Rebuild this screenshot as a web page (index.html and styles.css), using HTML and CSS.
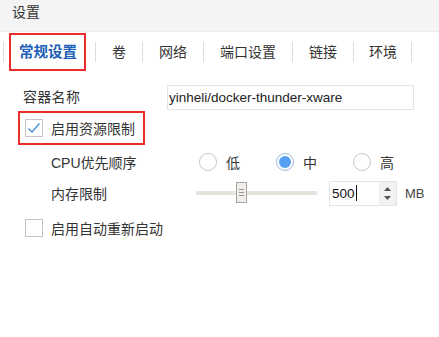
FILE: index.html
```html
<!DOCTYPE html>
<html lang="zh">
<head>
<meta charset="utf-8">
<title>设置</title>
<link rel="stylesheet" href="styles.css">
</head>
<body>
<div class="window">
  <div class="titlebar">设置</div>
  <div class="tabs">
    <div class="tab tab-active"><span class="mark">常规设置</span></div>
    <div class="tab">卷</div>
    <div class="tab">网络</div>
    <div class="tab">端口设置</div>
    <div class="tab">链接</div>
    <div class="tab tab-last">环境</div>
  </div>
  <div class="form">
    <div class="row row-name">
      <div class="label label-name">容器名称</div>
      <div class="text-input">yinheli/docker-thunder-xware</div>
    </div>
    <div class="limit-box">
      <span class="checkbox checked">
        <svg width="14" height="12" viewBox="0 0 14 12"><path d="M1.5 6.5 L5 10 L12.5 1.5" fill="none" stroke="#4a8fd8" stroke-width="1.4"/></svg>
      </span>
      <span class="check-label">启用资源限制</span>
    </div>
    <div class="row row-cpu">
      <div class="label label-sub">CPU优先顺序</div>
      <div class="radios">
        <div class="radio-opt"><span class="radio"></span><span class="radio-text">低</span></div>
        <div class="radio-opt"><span class="radio selected"><span class="dot"></span></span><span class="radio-text">中</span></div>
        <div class="radio-opt"><span class="radio"></span><span class="radio-text">高</span></div>
      </div>
    </div>
    <div class="row row-mem">
      <div class="label label-mem">内存限制</div>
      <div class="slider">
        <div class="track"></div>
        <div class="thumb"><i></i><i></i><i></i></div>
      </div>
      <div class="spin">
        <div class="spin-value">500<span class="caret"></span></div>
        <div class="spin-btns">
          <svg width="7" height="4" viewBox="0 0 7 4"><path d="M0 4 L3.5 0 L7 4 Z" fill="#555"/></svg>
          <svg width="7" height="4" viewBox="0 0 7 4"><path d="M0 0 L3.5 4 L7 0 Z" fill="#555"/></svg>
        </div>
      </div>
      <div class="unit">MB</div>
    </div>
    <div class="row row-restart">
      <span class="checkbox"></span>
      <span class="check-label">启用自动重新启动</span>
    </div>
  </div>
</div>
</body>
</html>
```
FILE: styles.css
```css
* { box-sizing: border-box; }
html, body {
  margin: 0;
  padding: 0;
  background: #ffffff;
}
body {
  font-family: "Liberation Sans", "Noto Sans CJK SC", sans-serif;
  font-size: 14px;
  color: #333333;
}
.window {
  width: 439px;
  height: 337px;
  background: #ffffff;
}
.titlebar {
  height: 32px;
  background: #f4f4f4;
  border-bottom: 1px solid #ececec;
  padding: 2px 0 0 12px;
  line-height: 20px;
  color: #333;
}
.tabs {
  display: flex;
  align-items: center;
  height: 39px;
  padding-left: 3px;
}
.tab {
  height: 20px;
  line-height: 20px;
  padding: 0 16px 0 16px;
  border-right: 1px solid #dcdcdc;
  color: #333;
}
.tabs .tab:first-child {
  border-left: 1px solid #dcdcdc;
}
.tab-last {
  padding: 0 14px 0 15px;
}
.tab-active {
  padding: 0 9px 0 5px;
  display: flex;
  align-items: center;
}
.mark {
  display: block;
  border: 2px solid #ee2b2b;
  padding: 7px 7px 7px 8px;
  line-height: 20px;
  height: 38px;
  color: #1e5fb8;
  font-weight: bold;
  font-size: 14.5px;
}
.form {
  padding-left: 23px;
}
.row {
  display: flex;
  align-items: center;
}
.row-name {
  margin-top: 14px;
  height: 25px;
}
.label-name {
  width: 144px;
  letter-spacing: 0.3px;
  padding-bottom: 4px;
}
.text-input {
  width: 247px;
  height: 25px;
  border: 1px solid #e4e4e4;
  padding-left: 1px;
  line-height: 23px;
  font-size: 13.5px;
  color: #222;
}
.limit-box {
  display: flex;
  align-items: center;
  width: 127px;
  height: 34px;
  margin: 1px 0 0 -5px;
  border: 2px solid #ee2b2b;
  padding-left: 5px;
}
.checkbox {
  display: flex;
  align-items: center;
  justify-content: center;
  width: 18px;
  height: 18px;
  border: 1px solid #c4c4c4;
  background: #fff;
  flex: none;
}
.check-label {
  margin-left: 8px;
}
.row-cpu {
  height: 32px;
  margin-top: 1px;
  padding-left: 28px;
}
.label-sub {
  width: 148px;
}
.radios {
  display: flex;
  align-items: center;
}
.radio-opt {
  display: flex;
  align-items: center;
  width: 77px;
}
.radio {
  display: flex;
  align-items: center;
  justify-content: center;
  width: 18px;
  height: 18px;
  border: 1px solid #c6c6c6;
  border-radius: 50%;
  background: #fff;
}
.radio.selected {
  border-color: #9bbce0;
}
.dot {
  width: 12px;
  height: 12px;
  border-radius: 50%;
  background: #55a0f2;
}
.radio-text {
  margin-left: 9px;
}
.row-mem {
  height: 30px;
  padding-left: 28px;
}
.label-mem {
  width: 145px;
}
.slider {
  position: relative;
  width: 121px;
  height: 22px;
  display: flex;
  align-items: center;
}
.track {
  width: 100%;
  height: 4px;
  background: #e6e2dd;
}
.thumb {
  position: absolute;
  left: 40px;
  top: 0;
  width: 11px;
  height: 21px;
  background: #f0eeeb;
  border: 1px solid #a8a5a0;
  display: flex;
  flex-direction: column;
  align-items: center;
  justify-content: center;
  gap: 2px;
}
.thumb i {
  display: block;
  width: 5px;
  height: 1px;
  background: #9a9792;
}
.spin {
  display: flex;
  margin-left: 12px;
  width: 68px;
  height: 25px;
  border: 1px solid #e4e4e4;
}
.spin-value {
  flex: 1;
  padding-left: 2px;
  line-height: 23px;
  font-size: 13.5px;
  color: #111;
  display: flex;
  align-items: center;
}
.caret {
  display: inline-block;
  width: 1px;
  height: 16px;
  background: #111;
  margin-left: 1px;
}
.spin-btns {
  width: 17px;
  background: #f2f2f2;
  display: flex;
  flex-direction: column;
  align-items: center;
  justify-content: center;
  gap: 5px;
}
.unit {
  margin-left: 8px;
  font-size: 13px;
  color: #444;
}
.row-restart {
  height: 19px;
  margin-top: 10px;
  padding-left: 2px;
}
```
